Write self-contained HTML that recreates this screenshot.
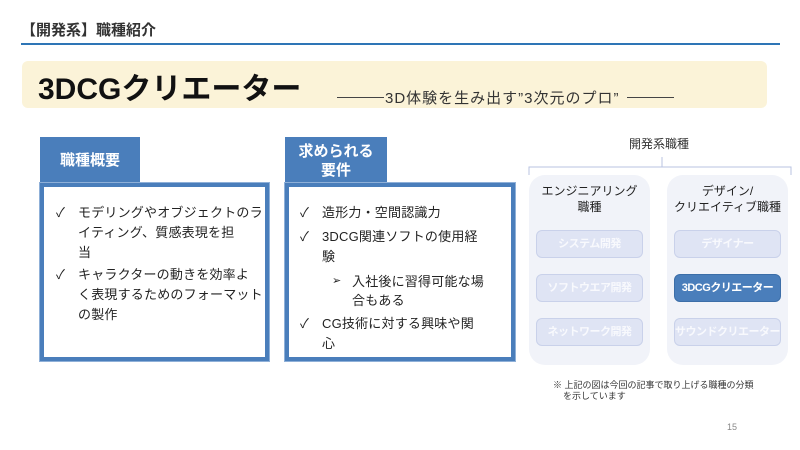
<!DOCTYPE html>
<html><head><meta charset="utf-8"><style>
*{margin:0;padding:0;box-sizing:border-box}
body{width:800px;height:450px;background:#fff;position:relative;overflow:hidden;font-family:"Liberation Sans","Noto Sans CJK JP",sans-serif;color:#222}
.a{position:absolute}
.tab{background:#4a7ebb;color:#fff;font-weight:bold;font-size:15px;text-align:center;line-height:19px}
.box{border:4px solid #4a7ebb;background:#fff;box-shadow:0 0 0 1px #8fb0d8}
.li{position:absolute;font-size:13px;letter-spacing:0.2px;line-height:20px;color:#222;white-space:nowrap}
.ck{position:absolute;left:-22px;top:0}
.col{background:#f1f3f9;border-radius:16px}
.pill{position:absolute;left:7px;width:107px;height:28px;border:1px solid #c9d1ea;background:#dfe4f4;border-radius:6px;color:#f8f9fd;font-weight:bold;font-size:11px;letter-spacing:-0.5px;text-align:center;line-height:26px;white-space:nowrap;overflow:hidden}
.hd{position:absolute;width:100%;text-align:center;font-size:12px;line-height:16px;color:#222}
</style></head><body>
<div class="a" style="left:21px;top:19px;font-size:15px;color:#333;font-weight:bold">【開発系】職種紹介</div>
<div class="a" style="left:21px;top:43px;width:759px;height:2px;background:#2e75b6"></div>
<div class="a" style="left:22px;top:61px;width:745px;height:47px;background:#fbf3d8;border-radius:6px"></div>
<div class="a" style="left:38px;top:64px;font-size:30px;font-weight:bold;color:#111;letter-spacing:0px;white-space:nowrap">3DCGクリエーター</div>
<div class="a" style="left:337px;top:97px;width:47px;height:1px;background:#444"></div>
<div class="a" style="left:385px;top:87px;font-size:15px;color:#333;white-space:nowrap;letter-spacing:1px">3D体験を生み出す”3次元のプロ”</div>
<div class="a" style="left:627px;top:97px;width:47px;height:1px;background:#444"></div>

<div class="a tab" style="left:40px;top:137px;width:100px;height:48px;padding-top:14px">職種概要</div>
<div class="a box" style="left:40px;top:183px;width:229px;height:178px"></div>
<div class="a" style="left:78px;top:203px;width:188px">
<div class="li" style="top:0;left:0"><span class="ck">✓</span>モデリングやオブジェクトのラ<br>イティング、質感表現を担<br>当</div>
<div class="li" style="top:62px;left:0"><span class="ck">✓</span>キャラクターの動きを効率よ<br>く表現するためのフォーマット<br>の製作</div>
</div>

<div class="a tab" style="left:285px;top:137px;width:102px;height:48px;padding-top:5px">求められる<br>要件</div>
<div class="a box" style="left:285px;top:183px;width:230px;height:178px"></div>
<div class="a" style="left:322px;top:203px;width:180px">
<div class="li" style="top:0;left:0"><span class="ck">✓</span>造形力・空間認識力</div>
<div class="li" style="top:24px;left:0"><span class="ck">✓</span>3DCG関連ソフトの使用経<br>験</div>
<div class="li" style="top:69px;left:30px;font-size:13px;line-height:19px"><span class="ck" style="left:-20px;font-size:11px">➢</span>入社後に習得可能な場<br>合もある</div>
<div class="li" style="top:111px;left:0"><span class="ck">✓</span>CG技術に対する興味や関<br>心</div>
</div>

<div class="a" style="left:629px;top:135px;font-size:12px;color:#333">開発系職種</div>
<svg class="a" style="left:525px;top:155px" width="270" height="22"><path d="M4 20 V12 H137 V2 M137 12 H266 V20" fill="none" stroke="#b8c3e2" stroke-width="1"/></svg>

<div class="a col" style="left:529px;top:175px;width:121px;height:190px">
<div class="hd" style="top:8px">エンジニアリング<br>職種</div>
<div class="pill" style="top:55px">システム開発</div>
<div class="pill" style="top:99px">ソフトウエア開発</div>
<div class="pill" style="top:143px">ネットワーク開発</div>
</div>
<div class="a col" style="left:667px;top:175px;width:121px;height:190px">
<div class="hd" style="top:8px">デザイン/<br>クリエイティブ職種</div>
<div class="pill" style="top:55px">デザイナー</div>
<div class="pill" style="top:99px;background:#4a7ebb;border-color:#3c6ea8;color:#fff">3DCGクリエーター</div>
<div class="pill" style="top:143px">サウンドクリエーター</div>
</div>

<div class="a" style="left:553px;top:380px;font-size:9px;line-height:11px;color:#333;width:240px;white-space:nowrap">※ 上記の図は今回の記事で取り上げる職種の分類<br>&nbsp;&nbsp;&nbsp;&nbsp;を示しています</div>
<div class="a" style="left:727px;top:422px;font-size:9px;color:#888">15</div>
</body></html>
